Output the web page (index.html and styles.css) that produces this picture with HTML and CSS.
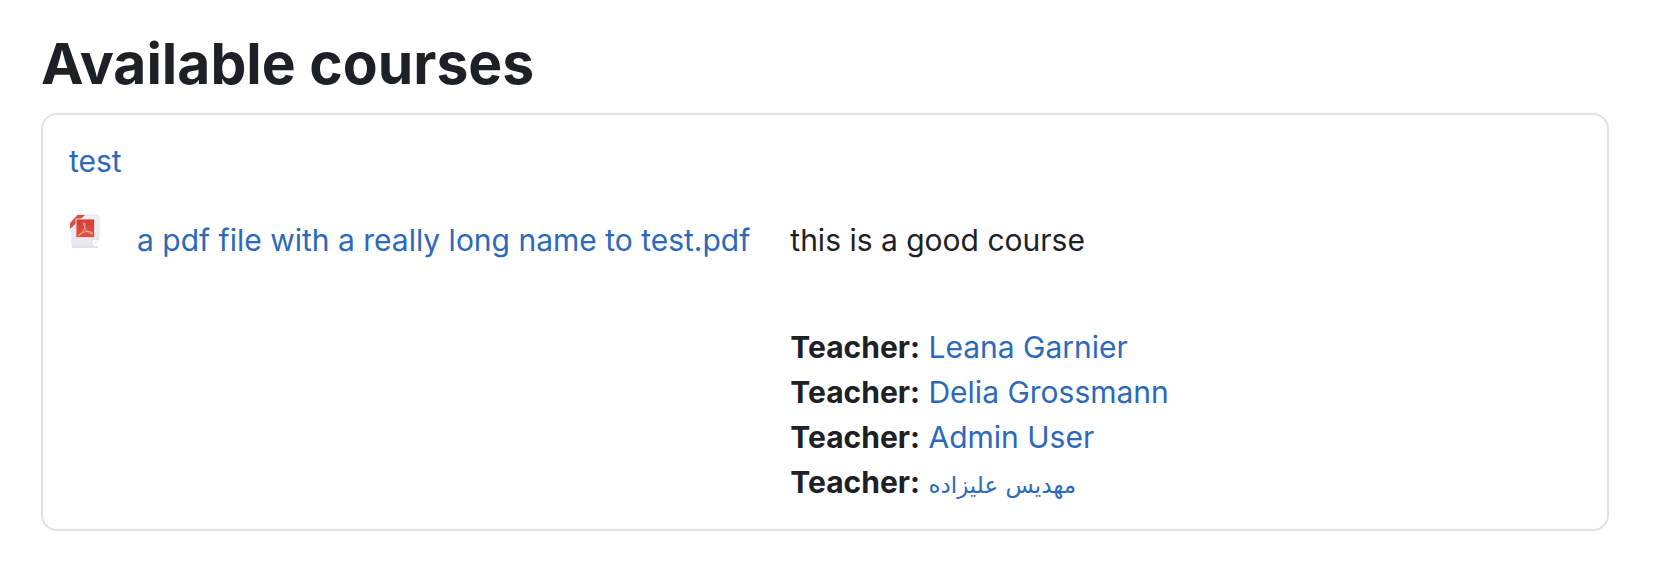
FILE: index.html
```html
<!doctype html>
<html lang="en">

<head>
    <meta charset="utf-8">
    <meta name="viewport" content="width=device-width, initial-scale=1">
    <title>Available courses</title>
    <link rel="stylesheet" href="styles.css">
</head>

<body>
<main class="courses">
    <h2 class="courses-title">Available courses</h2>
    <article class="coursebox">
        <h3 class="coursename"><a href="#">test</a></h3>
        <div class="content">
            <!-- course overview files -->
            <div class="coursefile">
                <svg class="fp-icon" viewBox="0 0 32 36" aria-hidden="true">
                    <defs>
                        <linearGradient id="paper" x1="0" y1="0" x2="0" y2="1">
                            <stop offset="0" stop-color="#f1f2f6"/>
                            <stop offset="1" stop-color="#e8e8ee"/>
                        </linearGradient>
                        <linearGradient id="red" x1="0" y1="0" x2="0" y2="1">
                            <stop offset="0" stop-color="#cf4038"/>
                            <stop offset="1" stop-color="#e6503f"/>
                        </linearGradient>
                    </defs>
                    <path d="M3 33h26" stroke="#c8c8c8" stroke-width="1.500" opacity=".7"/>
                    <path d="M5 1h23q2 0 2 2v22l-7 7H4.500Q3 32 3 30.500V3z" fill="url(#paper)" stroke="#e4e4ea"/>
                    <path d="M23 32v-5q0-1.500 1.500-1.500H30z" fill="#fff" stroke="#d8d8de" stroke-width=".7"/>
                    <path d="M0 0h9L1 9H0z" fill="#fff"/>
                    <path d="M8.500 1H16L1 15V9z" fill="#d74f46"/>
                    <path d="M7 5h18.500v18.500H7z" fill="url(#red)" stroke="#f4d0cd"/>
                    <path d="M9.500 21.500c4-2 7-6.500 6.500-12-1.200-1.500-2 0-1 2 1.500 4.500 4 7 8 8.500 1.500-1-1-2.500-3.500-2.500-4 0-7 1-10 4z" fill="none" stroke="#f0b0aa"/>
                </svg>
                <a href="#">a pdf file with a really long name to test.pdf</a>
            </div>
            <div class="details">
                <p class="summary">this is a good course</p>
                <ul class="teachers">
                    <li><b>Teacher:</b> <a href="#">Leana Garnier</a></li>
                    <li><b>Teacher:</b> <a href="#">Delia Grossmann</a></li>
                    <li><b>Teacher:</b> <a href="#">Admin User</a></li>
                    <li><b>Teacher:</b> <a class="name-fa" href="#" lang="fa">مهدیس علیزاده</a></li>
                </ul>
            </div>
        </div>
    </article>
</main>
</body>

</html>
```
FILE: styles.css
```css
* {
    box-sizing: border-box;
}

body {
    margin: 0;
    background-color: #fff;
    color: #1d2125;
    font-family: Inter, "DejaVu Sans", sans-serif;
    font-size: 30px;
    line-height: 45px;
}

a {
    color: #2c69bb;
    text-decoration: none;
}

a:hover {
    text-decoration: underline;
}

.courses {
    padding: 28px 47px 44px 41px;
}

.courses-title {
    margin: 0 0 13px;
    font-size: 57px;
    font-weight: 700;
    line-height: 72px;
}

.coursebox {
    padding: 24px 26px;
    border: 2px solid #dee2e6;
    border-radius: 16px;
}

.coursename {
    margin: 0 0 30px;
    font-size: 30px;
    font-weight: 400;
}

.content {
    display: flex;
    align-items: flex-start;
    gap: 40px;
}

.coursefile {
    display: flex;
    align-items: flex-start;
    gap: 36px;
    padding-top: 4px;
}

/* file type icon, sits a bit above the file name */
.fp-icon {
    flex: none;
    width: 32px;
    height: 36px;
    margin-top: -4px;
}

.details {
    padding-top: 4px;
}

.summary {
    margin: 0 0 62px;
}

.teachers {
    margin: 0;
    padding: 0;
    list-style: none;
}

.name-fa {
    font-family: "DejaVu Sans", sans-serif;
    font-size: 23px;
    line-height: 24px;
}
```
